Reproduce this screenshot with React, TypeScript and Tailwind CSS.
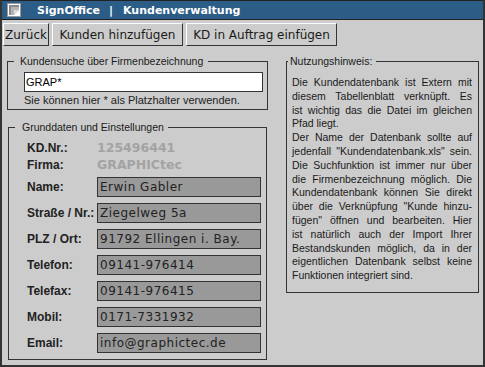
import React from "react";

const sans = "font-['Liberation_Sans',Arial,sans-serif]";
const deja = "font-['DejaVu_Sans',Verdana,sans-serif]";

function WinButton({ label, width }: { label: string; width: string }) {
  return (
    <button
      className={`${deja} ${width} h-[23px] bg-[#cccccc] text-[12px] leading-none text-[#1a1a1a] border border-t-white border-l-white border-r-[#333] border-b-[#333] flex items-center justify-center`}
    >
      {label}
    </button>
  );
}

const rows: [string, string][] = [
  ["Name:", "Erwin Gabler"],
  ["Straße / Nr.:", "Ziegelweg 5a"],
  ["PLZ / Ort:", "91792 Ellingen i. Bay."],
  ["Telefon:", "09141-976414"],
  ["Telefax:", "09141-976415"],
  ["Mobil:", "0171-7331932"],
  ["Email:", "info@graphictec.de"],
];

const hint: [string, boolean][] = [
  ["Die Kundendatenbank ist Extern mit", true],
  ["diesem Tabellenblatt verknüpft. Es", true],
  ["ist wichtig das die Datei im gleichen", true],
  ["Pfad liegt.", false],
  ["Der Name der Datenbank sollte auf", true],
  ['jedenfall "Kundendatenbank.xls" sein.', true],
  ["Die Suchfunktion ist immer nur über", true],
  ["die Firmenbezeichnung möglich. Die", true],
  ["Kundendatenbank können Sie direkt", true],
  ['über die Verknüpfung "Kunde hinzu-', true],
  ['fügen" öffnen und bearbeiten. Hier', true],
  ["ist natürlich auch der Import Ihrer", true],
  ["Bestandskunden möglich, da in der", true],
  ["eigentlichen Datenbank selbst keine", true],
  ["Funktionen integriert sind.", false],
];

export default function App() {
  return (
    <div className="w-[485px] h-[367px] bg-[#cccccc] border-x-2 border-b-2 border-[#333] overflow-hidden">
      {/* Title bar */}
      <div className="h-[20px] bg-[#2c5d87] border-y border-[#222] flex items-center">
        <svg width="14" height="14" viewBox="0 0 14 14" className="ml-[5px]">
          <rect x="0.5" y="0.5" width="13" height="13" fill="#fff" stroke="#9a9a9a" />
          <path d="M2 2 H12 V4 H4 V12 H2 Z" fill="#8a8a8a" />
          <path d="M4 4 H12 V7 L7 12 H4 Z" fill="#b5b5b5" />
          <path d="M7 12 L12 7 H7 Z" fill="#dcdcdc" />
        </svg>
        <div className={`${deja} ml-[16px] text-white font-bold text-[11px] leading-none flex`}>
          <span>SignOffice</span>
          <span className="ml-[9px]">|</span>
          <span className="ml-[10px]">Kundenverwaltung</span>
        </div>
      </div>

      {/* Toolbar */}
      <div className="flex gap-[3px] pl-[1px] pt-[3px]">
        <WinButton label="Zurück" width="w-[46px]" />
        <WinButton label="Kunden hinzufügen" width="w-[131px]" />
        <WinButton label="KD in Auftrag einfügen" width="w-[151px]" />
      </div>

      <div className="flex mt-[9px]">
        {/* Left column */}
        <div className="ml-[5px] w-[261px] flex flex-col gap-[11px]">
          <fieldset className="border border-[#333] pl-[16px] pr-[4px] pb-[1px]">
            <legend className={`${sans} -ml-[10px] pl-[6px] pr-[5px] text-[10.5px] leading-[12px] text-[#1a1a1a]`}>
              Kundensuche über Firmenbezeichnung
            </legend>
            <div className={`${sans} mt-[5px] h-[20px] bg-white border border-[#333] pl-[1px] text-[11px] leading-[18px] text-black`}>
              GRAP*
            </div>
            <div className={`${sans} text-[11px] leading-[14px] mt-[1px] mb-[1px] text-[#222]`}>
              Sie können hier * als Platzhalter verwenden.
            </div>
          </fieldset>

          <fieldset className="ml-[1px] w-[259px] border border-[#333] pl-[18px] pr-[5px] pb-[6px]">
            <legend className={`${sans} -ml-[12px] pl-[7px] pr-[4px] text-[10.5px] leading-[12px] text-[#1a1a1a]`}>
              Grunddaten und Einstellungen
            </legend>
            <div className="mt-[7px] flex items-center h-[16px]">
              <span className={`${sans} w-[70px] font-bold text-[12px] text-[#222]`}>KD.Nr.:</span>
              <span className={`${deja} font-bold text-[12.5px] text-[#a3a3a3]`}>125496441</span>
            </div>
            <div className="flex items-center h-[16px] mt-[1px]">
              <span className={`${sans} w-[70px] font-bold text-[12px] text-[#222]`}>Firma:</span>
              <span className={`${deja} font-bold text-[12.5px] text-[#a3a3a3]`}>GRAPHICtec</span>
            </div>
            <div className="mt-[4px] flex flex-col gap-[6px]">
              {rows.map(([label, value]) => (
                <div key={label} className="flex items-center">
                  <span className={`${sans} w-[70px] font-bold text-[12px] text-[#222] whitespace-nowrap`}>{label}</span>
                  <div
                    className={`${deja} w-[164px] h-[20px] bg-[#999999] border border-[#333] pl-[2px] text-[12px] tracking-[0.5px] leading-[18px] text-[#222] whitespace-nowrap overflow-hidden`}
                  >
                    {value}
                  </div>
                </div>
              ))}
            </div>
          </fieldset>
        </div>

        {/* Right column */}
        <fieldset className="ml-[18px] w-[193px] h-[238px] border border-[#333] pl-[5px] pr-[6px]">
          <legend className={`${sans} -ml-[4px] pl-[2px] pr-[4px] text-[10.5px] leading-[12px] text-[#1a1a1a]`}>
            Nutzungshinweis:
          </legend>
          <div className={`${sans} mt-[9px] text-[10.5px] leading-[13.8px] text-[#1a1a1a]`}>
            {hint.map(([line, justify], i) => (
              <div
                key={i}
                className={justify ? "text-justify [text-align-last:justify] whitespace-nowrap" : "whitespace-nowrap"}
              >
                {line}
              </div>
            ))}
          </div>
        </fieldset>
      </div>
    </div>
  );
}
